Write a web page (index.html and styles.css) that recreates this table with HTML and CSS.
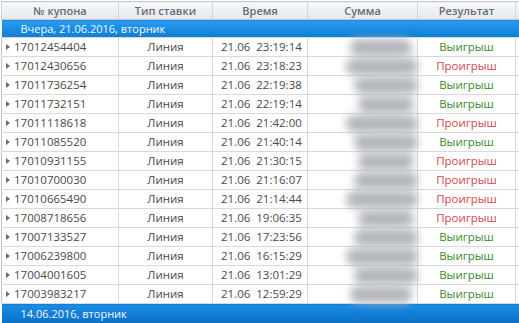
FILE: index.html
```html
<!DOCTYPE html>
<html>
<head>
<meta charset="utf-8">
<link rel="stylesheet" href="styles.css">
</head>
<body>
<div class="grid">
<table class="bets">
<colgroup>
<col class="c-num"><col class="c-type"><col class="c-time"><col class="c-sum"><col class="c-res"><col class="c-end">
</colgroup>
<thead>
<tr><th>№ купона</th><th>Тип ставки</th><th>Время</th><th>Сумма</th><th>Результат</th><th class="end"></th></tr>
</thead>
<tbody>
<tr class="group"><td colspan="6">Вчера, 21.06.2016, вторник</td></tr>
<tr><td class="num"><span class="arr"></span>17012454404</td><td class="type">Линия</td><td class="time">21.06&nbsp;&nbsp;23:19:14</td><td class="sum"><span class="blob b1"></span></td><td class="win">Выигрыш</td><td></td></tr>
<tr><td class="num"><span class="arr"></span>17012430656</td><td class="type">Линия</td><td class="time">21.06&nbsp;&nbsp;23:18:23</td><td class="sum"><span class="blob b2"></span></td><td class="lose">Проигрыш</td><td></td></tr>
<tr><td class="num"><span class="arr"></span>17011736254</td><td class="type">Линия</td><td class="time">21.06&nbsp;&nbsp;22:19:38</td><td class="sum"><span class="blob b3"></span></td><td class="win">Выигрыш</td><td></td></tr>
<tr><td class="num"><span class="arr"></span>17011732151</td><td class="type">Линия</td><td class="time">21.06&nbsp;&nbsp;22:19:14</td><td class="sum"><span class="blob b4"></span></td><td class="win">Выигрыш</td><td></td></tr>
<tr><td class="num"><span class="arr"></span>17011118618</td><td class="type">Линия</td><td class="time">21.06&nbsp;&nbsp;21:42:00</td><td class="sum"><span class="blob b2"></span></td><td class="lose">Проигрыш</td><td></td></tr>
<tr><td class="num"><span class="arr"></span>17011085520</td><td class="type">Линия</td><td class="time">21.06&nbsp;&nbsp;21:40:14</td><td class="sum"><span class="blob b3"></span></td><td class="win">Выигрыш</td><td></td></tr>
<tr><td class="num"><span class="arr"></span>17010931155</td><td class="type">Линия</td><td class="time">21.06&nbsp;&nbsp;21:30:15</td><td class="sum"><span class="blob b4"></span></td><td class="lose">Проигрыш</td><td></td></tr>
<tr><td class="num"><span class="arr"></span>17010700030</td><td class="type">Линия</td><td class="time">21.06&nbsp;&nbsp;21:16:07</td><td class="sum"><span class="blob b3"></span></td><td class="lose">Проигрыш</td><td></td></tr>
<tr><td class="num"><span class="arr"></span>17010665490</td><td class="type">Линия</td><td class="time">21.06&nbsp;&nbsp;21:14:44</td><td class="sum"><span class="blob b2"></span></td><td class="lose">Проигрыш</td><td></td></tr>
<tr><td class="num"><span class="arr"></span>17008718656</td><td class="type">Линия</td><td class="time">21.06&nbsp;&nbsp;19:06:35</td><td class="sum"><span class="blob b4"></span></td><td class="lose">Проигрыш</td><td></td></tr>
<tr><td class="num"><span class="arr"></span>17007133527</td><td class="type">Линия</td><td class="time">21.06&nbsp;&nbsp;17:23:56</td><td class="sum"><span class="blob b3"></span></td><td class="win">Выигрыш</td><td></td></tr>
<tr><td class="num"><span class="arr"></span>17006239800</td><td class="type">Линия</td><td class="time">21.06&nbsp;&nbsp;16:15:29</td><td class="sum"><span class="blob b2"></span></td><td class="win">Выигрыш</td><td></td></tr>
<tr><td class="num"><span class="arr"></span>17004001605</td><td class="type">Линия</td><td class="time">21.06&nbsp;&nbsp;13:01:29</td><td class="sum"><span class="blob b3"></span></td><td class="win">Выигрыш</td><td></td></tr>
<tr><td class="num"><span class="arr"></span>17003983217</td><td class="type">Линия</td><td class="time">21.06&nbsp;&nbsp;12:59:29</td><td class="sum"><span class="blob b1"></span></td><td class="win">Выигрыш</td><td></td></tr>
<tr class="group last"><td colspan="6">14.06.2016, вторник</td></tr>
</tbody>
</table>
</div>
</body>
</html>
```
FILE: styles.css
```css
html, body {
  margin: 0;
  padding: 0;
  background: #ffffff;
}
body {
  font-family: "Open Sans", "Noto Sans", sans-serif;
  width: 519px;
  height: 323px;
  overflow: hidden;
}
.grid {
  padding: 1px 0 0 1px;
}
.bets {
  border-collapse: collapse;
  table-layout: fixed;
  width: 518px;
}
.c-num { width: 117px; }
.c-type { width: 94px; }
.c-time { width: 95px; }
.c-sum { width: 110px; }
.c-res { width: 98px; }
.c-end { width: 4px; }

th {
  height: 17px;
  padding: 0;
  font-size: 11px;
  font-weight: 600;
  color: #666c74;
  background: linear-gradient(#f7f8fa, #e3e7ec);
  border: 1px solid #c3c8ce;
  border-left-color: #d2d6dc;
  border-right-color: #d2d6dc;
  text-align: center;
  line-height: 17px;
}
th.end {
  border-right: none;
}
td {
  height: 18px;
  padding: 0;
  font-size: 11.5px;
  color: #4a4a4a;
  border: 1px solid #d9d9d9;
  line-height: 18px;
  white-space: nowrap;
  overflow: hidden;
}
tbody tr td:first-child {
  border-left-color: #bfc4ca;
}
td.num {
  padding-left: 4px;
}
.arr {
  display: inline-block;
  width: 0;
  height: 0;
  border-left: 4px solid #6a6a6a;
  border-top: 3px solid transparent;
  border-bottom: 3px solid transparent;
  margin-right: 4px;
  vertical-align: 1px;
}
td.type {
  text-align: center;
}
td.time {
  padding-left: 8px;
}
td.sum {
  overflow: visible;
}
.blob {
  display: block;
  height: 17px;
  margin: 1px 0 0 42px;
  width: 62px;
  border-radius: 8px;
  background: #b3b6bc;
  filter: blur(4px);
}
.b2 { margin-left: 38px; width: 72px; }
.b3 { margin-left: 46px; width: 64px; }
.b4 { margin-left: 50px; width: 56px; }
td.win {
  text-align: center;
  color: #3a8a2e;
}
td.lose {
  text-align: center;
  color: #d04848;
}
tr.group td {
  height: 17px;
  line-height: 17px;
  font-size: 11px;
  color: #f2f8ff;
  background: linear-gradient(#2b9af0, #0c7ed6);
  border: none;
  padding-left: 19px;
}
tr.group.last td {
  height: 20px;
  line-height: 20px;
  background: linear-gradient(#1a8ce6, #0a6fc4);
}
```
